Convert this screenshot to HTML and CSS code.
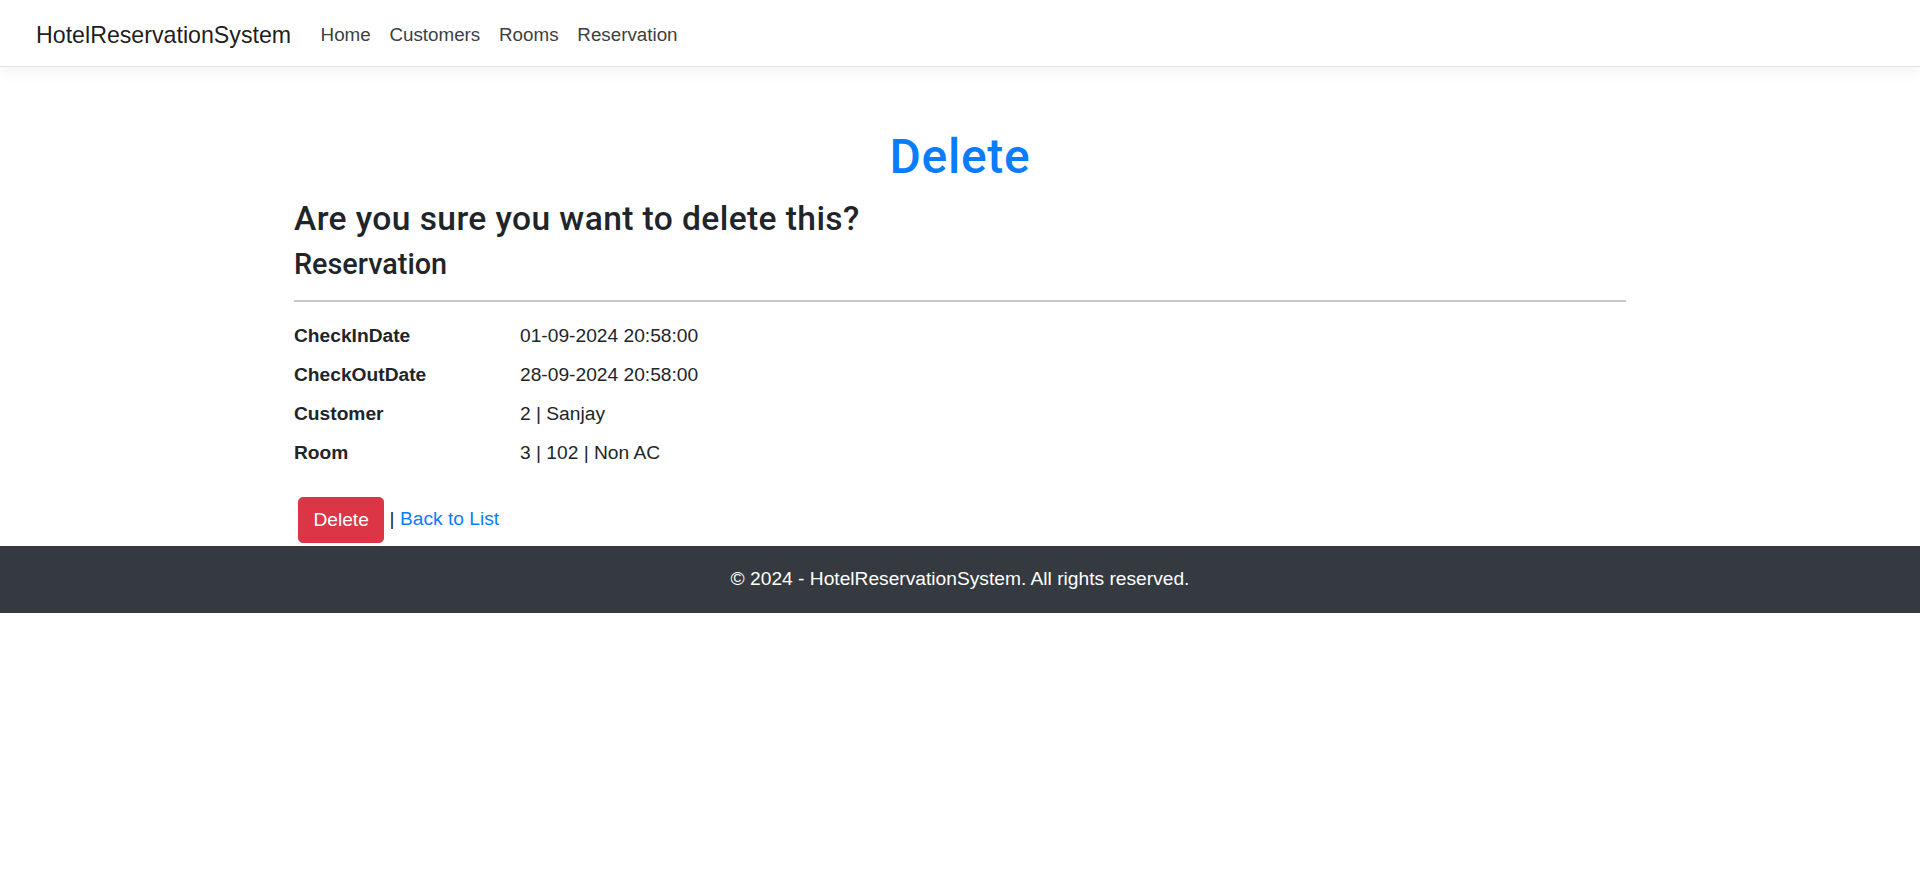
FILE: index.html
```html
<!DOCTYPE html>
<html lang="en">
<head>
<meta charset="utf-8">
<title>Delete - HotelReservationSystem</title>
<link rel="stylesheet" href="styles.css">
</head>
<body>
<header>
  <nav class="navbar">
    <a class="brand" href="#">HotelReservationSystem</a>
    <ul class="nav">
      <li><a class="nav-link" href="#">Home</a></li>
      <li><a class="nav-link" href="#">Customers</a></li>
      <li><a class="nav-link" href="#">Rooms</a></li>
      <li><a class="nav-link" href="#">Reservation</a></li>
    </ul>
  </nav>
</header>
<div class="container">
  <main class="main">
    <h1 class="page-title">Delete</h1>
    <h3 class="confirm">Are you sure you want to delete this?</h3>
    <div>
      <h4 class="entity">Reservation</h4>
      <hr class="divider">
      <dl class="details">
        <dt>CheckInDate</dt>
        <dd>01-09-2024 20:58:00</dd>
        <dt>CheckOutDate</dt>
        <dd>28-09-2024 20:58:00</dd>
        <dt>Customer</dt>
        <dd>2 | Sanjay</dd>
        <dt>Room</dt>
        <dd>3 | 102 | Non AC</dd>
      </dl>
      <form class="actions">
        <button type="button" class="btn-danger">Delete</button> | <a class="link" href="#">Back to List</a>
      </form>
    </div>
  </main>
</div>
<footer class="footer">© 2024 - HotelReservationSystem. All rights reserved.</footer>
</body>
</html>
```
FILE: styles.css
```css
html, body {
  margin: 0;
  padding: 0;
}
body {
  font-family: "Liberation Sans", Arial, sans-serif;
  font-size: 19.2px;
  line-height: 1.5;
  color: #212529;
  background: #fff;
}
a {
  text-decoration: none;
}
.navbar {
  box-sizing: border-box;
  display: flex;
  align-items: center;
  height: 67px;
  padding: 4px 36px 0;
  background: #fff;
  border-bottom: 1px solid #dee2e6;
  box-shadow: 0 5px 14px rgba(0, 0, 0, 0.05);
}
.brand {
  font-size: 23.2px;
  line-height: 1.5;
  color: rgba(0, 0, 0, 0.9);
  margin-right: 20px;
}
.nav {
  display: flex;
  list-style: none;
  margin: 0;
  padding: 0;
}
.nav-link {
  display: block;
  padding: 9.6px 9.4px;
  font-size: 18.8px;
  color: #3a3f44;
}
.container {
  width: 1332px;
  margin: 0 auto;
}
.main {
  padding-bottom: 3.5px;
}
.page-title {
  margin: 61px 0 13px;
  font-family: Roboto, "Liberation Sans", sans-serif;
  font-size: 48px;
  line-height: 57.6px;
  font-weight: 500;
  letter-spacing: 0.7px;
  text-align: center;
  color: #0a7cff;
}
.confirm {
  margin: 0 0 8px;
  font-family: Roboto, "Liberation Sans", sans-serif;
  font-size: 33.6px;
  line-height: 40.3px;
  font-weight: 500;
  letter-spacing: 0.4px;
}
.entity {
  margin: 0;
  font-family: Roboto, "Liberation Sans", sans-serif;
  font-size: 28.8px;
  line-height: 34.6px;
  font-weight: 500;
}
.divider {
  height: 0;
  border: 0;
  border-top: 2px solid #c6c7c8;
  margin: 19px 0 19px;
}
.details {
  display: grid;
  grid-template-columns: 226px 1fr;
  margin: 0 0 20px;
}
.details dt {
  font-weight: 700;
  line-height: 29px;
  margin-bottom: 10px;
}
.details dd {
  margin: 0 0 10px;
  line-height: 29px;
}
.actions {
  margin: 0;
  padding-left: 4px;
}
.btn-danger {
  font-family: inherit;
  font-size: 19.2px;
  line-height: 28.8px;
  padding: 7.2px 14.4px;
  color: #fff;
  background: #dc3545;
  border: 1px solid #dc3545;
  border-radius: 4.8px;
  cursor: pointer;
}
.link {
  color: #0a7cff;
}
.footer {
  display: flex;
  align-items: center;
  justify-content: center;
  height: 67px;
  background: #343a40;
  color: #fff;
}
```
